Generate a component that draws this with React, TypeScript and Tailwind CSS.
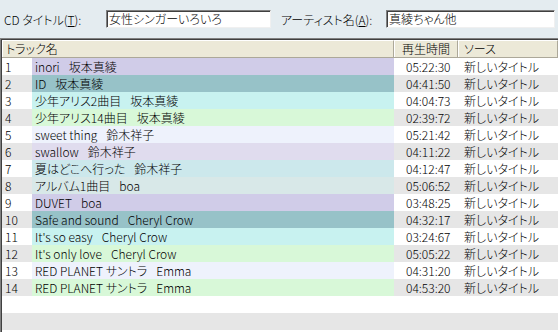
import React from "react";

type Row = { n: number; title: string; artist: string; time: string; color: string };

const rows: Row[] = [
  { n: 1, title: "inori", artist: "坂本真綾", time: "05:22:30", color: "bg-[#d0cce8]" },
  { n: 2, title: "ID", artist: "坂本真綾", time: "04:41:50", color: "bg-[#97c2c8]" },
  { n: 3, title: "少年アリス2曲目", artist: "坂本真綾", time: "04:04:73", color: "bg-[#c8f2f0]" },
  { n: 4, title: "少年アリス14曲目", artist: "坂本真綾", time: "02:39:72", color: "bg-[#d8f8d8]" },
  { n: 5, title: "sweet thing", artist: "鈴木祥子", time: "05:21:42", color: "bg-[#eef2fc]" },
  { n: 6, title: "swallow", artist: "鈴木祥子", time: "04:11:22", color: "bg-[#e0dcee]" },
  { n: 7, title: "夏はどこへ行った", artist: "鈴木祥子", time: "04:12:47", color: "bg-[#cce8ec]" },
  { n: 8, title: "アルバム1曲目", artist: "boa", time: "05:06:52", color: "bg-[#d8e8e8]" },
  { n: 9, title: "DUVET", artist: "boa", time: "03:48:25", color: "bg-[#d0cce8]" },
  { n: 10, title: "Safe and sound", artist: "Cheryl Crow", time: "04:32:17", color: "bg-[#97c2c8]" },
  { n: 11, title: "It's so easy", artist: "Cheryl Crow", time: "03:24:67", color: "bg-[#c8f2f0]" },
  { n: 12, title: "It's only love", artist: "Cheryl Crow", time: "05:05:22", color: "bg-[#d8f8d8]" },
  { n: 13, title: "RED PLANET サントラ", artist: "Emma", time: "04:31:20", color: "bg-[#eef2fc]" },
  { n: 14, title: "RED PLANET サントラ", artist: "Emma", time: "04:53:20", color: "bg-[#d8f8d8]" },
];

const font = "font-['MS_UI_Gothic','Noto_Sans_CJK_JP',sans-serif] [font-feature-settings:'palt'] font-light";

function HeaderCell({ children, className = "" }: { children: React.ReactNode; className?: string }) {
  return (
    <div
      className={`h-full flex items-center border-t border-l border-t-white border-l-white border-r border-r-[#aca899] ${className}`}
    >
      {children}
    </div>
  );
}

export default function App() {
  return (
    <div className={`w-[558px] h-[332px] overflow-hidden bg-white text-[12px] leading-none text-black ${font}`}>
      {/* top bar */}
      <div className="h-[38px] bg-[#e4ecf0] flex items-center">
        <div className="w-[106px] pl-[4px] pt-[1px]">
          CD タイトル(<span className="underline">T</span>):
        </div>
        <div className="w-[165px] h-[18px] bg-white border-t border-l border-t-[#808080] border-l-[#808080] border-b border-r border-b-[#f0f0f0] border-r-[#f0f0f0] shadow-[inset_1px_1px_0_#404040] flex items-center pl-[2px]">
          女性シンガーいろいろ
        </div>
        <div className="w-[115px] pl-[10px] pt-[1px]">
          アーティスト名(<span className="underline">A</span>):
        </div>
        <div className="w-[169px] h-[18px] bg-white border-t border-l border-t-[#808080] border-l-[#808080] border-b border-r border-b-[#f0f0f0] border-r-[#f0f0f0] shadow-[inset_1px_1px_0_#404040] flex items-center pl-[2px]">
          真綾ちゃん他
        </div>
      </div>

      {/* list */}
      <div className="border-t border-l border-[#808080]">
        <div className="border-t border-l border-[#404040]">
          {/* header */}
          <div className="h-[18px] bg-[#ece9d8] flex border-b border-b-[#aca899]">
            <HeaderCell className="w-[392px] pl-[3px]">トラック名</HeaderCell>
            <HeaderCell className="w-[64px] pl-[7px]">再生時間</HeaderCell>
            <HeaderCell className="flex-1 pl-[5px]">ソース</HeaderCell>
          </div>
          {rows.map((r, i) => {
            const side = i % 2 === 0 ? "bg-white" : "bg-[#e6e6e6]";
            return (
              <div key={r.n} className={`h-[17px] flex ${side}`}>
                <div className="w-[30px] pl-[3px] flex items-center">{r.n}</div>
                <div className={`w-[362px] pl-[3px] flex items-center ${r.color}`}>
                  <span>{r.title}</span>
                  <span className="ml-[9px]">{r.artist}</span>
                </div>
                <div className="w-[68px] pl-[12px] flex items-center">{r.time}</div>
                <div className="flex-1 pl-[2px] flex items-center">新しいタイトル</div>
              </div>
            );
          })}
          <div className="h-[17px] bg-white" />
          <div className="h-[17px] bg-[#e6e6e6]" />
          <div className="h-[17px] bg-white" />
        </div>
      </div>
    </div>
  );
}
